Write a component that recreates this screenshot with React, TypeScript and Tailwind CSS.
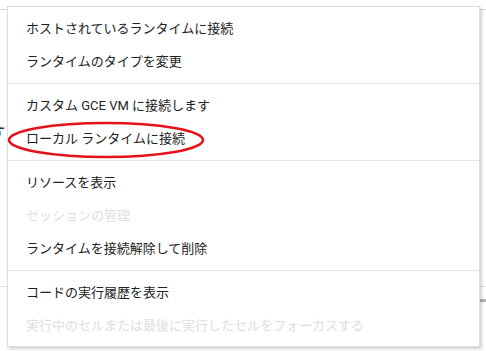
type MenuEntry = { label: string; disabled?: boolean } | 'divider';

const ENTRIES: MenuEntry[] = [
  { label: 'ホストされているランタイムに接続' },
  { label: 'ランタイムのタイプを変更' },
  'divider',
  { label: 'カスタム GCE VM に接続します' },
  { label: 'ローカル ランタイムに接続' },
  'divider',
  { label: 'リソースを表示' },
  { label: 'セッションの管理', disabled: true },
  { label: 'ランタイムを接続解除して削除' },
  'divider',
  { label: 'コードの実行履歴を表示' },
  { label: '実行中のセルまたは最後に実行したセルをフォーカスする', disabled: true },
];

export default function App() {
  return (
    <div
      className="relative w-[486px] h-[351px] overflow-hidden bg-white"
      style={{ fontFamily: 'Roboto, "Noto Sans CJK JP", sans-serif' }}
    >
      {/* page behind the menu */}
      <div className="mt-[9px] h-px bg-[#d9d9d9]" />
      <div className="mt-[112px] -ml-[9px] text-[14px] leading-[20px] font-bold text-[#333]">す</div>
      <div className="mt-[144px] h-px bg-[#e3e3e3]" />
      <div className="mt-[12px] flex justify-end">
        <div className="w-[8px] h-[3px] bg-[#b5b5b5]" />
      </div>

      {/* runtime menu */}
      <div className="absolute left-[7px] top-[6px] w-[473px] bg-white border border-[#dcdcdc] shadow-[2px_2px_3px_rgba(0,0,0,0.18)] pt-[5px] pb-[4px]">
        {ENTRIES.map((entry, i) =>
          entry === 'divider' ? (
            <div key={i} className="py-[5px]">
              <div className="h-px bg-[#e6e6e6]" />
            </div>
          ) : (
            <div
              key={i}
              className={`h-[33px] flex items-center pl-[18px] text-[13px] whitespace-nowrap ${entry.disabled ? 'text-[#dedede]' : 'text-[#212121]'}`}
            >
              {entry.label}
            </div>
          ),
        )}
      </div>

      {/* red annotation */}
      <svg className="absolute left-0 top-0 pointer-events-none" width="486" height="351">
        <ellipse cx="106" cy="140" rx="97" ry="17" fill="none" stroke="#e5121b" strokeWidth="2.5" />
      </svg>
    </div>
  );
}
